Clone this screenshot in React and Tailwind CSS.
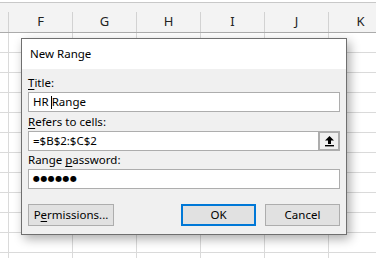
import React from "react";

const columns = [
  { label: "", width: "w-[9px]" },
  { label: "F", width: "w-[64px]" },
  { label: "G", width: "w-[64px]" },
  { label: "H", width: "w-[64px]" },
  { label: "I", width: "w-[64px]" },
  { label: "J", width: "w-[64px]" },
  { label: "K", width: "w-[64px]" },
];

const rows = Array.from({ length: 12 }, (_, i) => i);

function SheetBackdrop() {
  return (
    <div className="flex flex-col">
      <div className="h-[3px] border-b border-[#c8c8c8] bg-white" />
      <div className="h-[9px] bg-[#f3f3f3]" />
      <div className="flex h-[21px] border-b border-[#ababab] bg-[#f3f3f3]">
        {columns.map((col, i) => (
          <div
            key={i}
            className={`${col.width} shrink-0 border-r border-[#d2d2d2] flex items-center justify-center text-[13px] text-[#222]`}
          >
            {col.label}
          </div>
        ))}
      </div>
      {rows.map((r) => (
        <div key={r} className="flex h-[20px] border-b border-[#dadada]">
          {columns.map((col, i) => (
            <div key={i} className={`${col.width} shrink-0 border-r border-[#dadada]`} />
          ))}
        </div>
      ))}
    </div>
  );
}

function DialogButton({ children, primary, className = "" }) {
  return (
    <button
      type="button"
      className={`h-[22px] bg-[#e1e1e1] text-[11.5px] text-black flex items-center justify-center ${
        primary ? "border-2 border-[#0078d7]" : "border border-[#adadad]"
      } ${className}`}
    >
      {children}
    </button>
  );
}

function CollapseIcon() {
  return (
    <svg width="11" height="12" viewBox="0 0 11 12" className="block">
      <path d="M5.5 1 L10 5.5 L7 5.5 L7 9 L4 9 L4 5.5 L1 5.5 Z" fill="#000" />
      <rect x="1" y="10" width="9" height="1.4" fill="#000" />
    </svg>
  );
}

export default function App() {
  return (
    <div className="relative w-[376px] h-[258px] overflow-hidden bg-white font-['Noto_Sans','Liberation_Sans',sans-serif]">
      <SheetBackdrop />

      <div className="absolute left-[21px] top-[38px] w-[326px] h-[197px] border border-[#6f6f6f] bg-[#f0f0f0] shadow-[3px_4px_10px_rgba(0,0,0,0.32)] flex flex-col">
        <div className="h-[30px] bg-white flex items-center pl-[8px] text-[11.5px] text-black">
          New Range
        </div>

        <div className="flex flex-col px-[6px] pt-[4px] text-[11.5px] text-black">
          <label className="h-[19px] flex items-center">
            <span className="underline underline-offset-2">T</span>itle:
          </label>
          <div className="h-[20px] border border-[#adadad] bg-white flex items-center pl-[4px] whitespace-pre">
            <span>HR </span>
            <span className="inline-block w-[1px] h-[13px] bg-[#000] -ml-[1px]" />
            <span>Range</span>
          </div>

          <label className="h-[19px] flex items-center">
            <span className="underline underline-offset-2">R</span>efers to cells:
          </label>
          <div className="h-[20px] border border-[#adadad] bg-white flex items-center pl-[4px]">
            <span className="flex-1">=$B$2:$C$2</span>
            <div className="w-[22px] h-[20px] -mr-[1px] border-2 border-[#adadad] bg-[#f0f0f0] flex items-center justify-center">
              <CollapseIcon />
            </div>
          </div>

          <label className="h-[18px] flex items-center whitespace-pre">
            Range <span className="underline underline-offset-2">p</span>assword:
          </label>
          <div className="h-[20px] border border-[#adadad] bg-white flex items-center pl-[4px] text-[8px] tracking-[0.4px] font-['DejaVu_Sans',sans-serif]">
            ●●●●●●
          </div>

          <div className="flex items-center mt-[15px]">
            <DialogButton className="w-[86px]">
              P<span className="underline underline-offset-2">e</span>rmissions...
            </DialogButton>
            <div className="flex-1" />
            <DialogButton primary className="w-[75px]">
              OK
            </DialogButton>
            <DialogButton className="w-[75px] ml-[9px]">Cancel</DialogButton>
          </div>
        </div>
      </div>
    </div>
  );
}
